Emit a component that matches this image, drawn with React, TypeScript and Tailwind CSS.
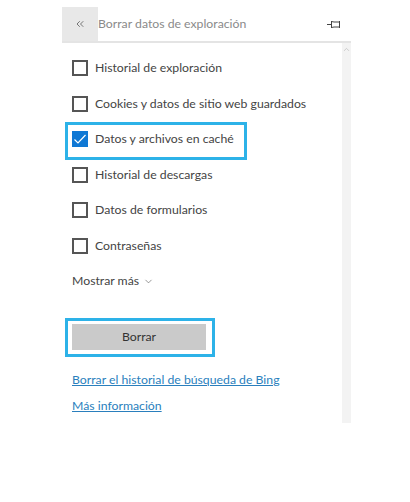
import { ChevronDown, ChevronUp, ChevronsLeft } from 'lucide-react'

function Checkbox({ label, checked }: { label: string; checked?: boolean }) {
  return (
    <div className="flex items-center gap-[7px] h-4">
      {checked ? (
        <div className="w-4 h-4 bg-[#0f78d4] flex items-center justify-center">
          <svg width="14" height="14" viewBox="0 0 14 14" fill="none">
            <path d="M1.5 7.5 L5 11 L12.5 3" stroke="white" strokeWidth="1.2" />
          </svg>
        </div>
      ) : (
        <div className="w-4 h-4 border-2 border-[#555555] bg-white" />
      )}
      <span className="text-[12.25px] leading-4 text-[#444444] whitespace-nowrap">{label}</span>
    </div>
  )
}

export default function App() {
  return (
    <div className="font-['Lato',sans-serif] w-[410px] h-[502px] bg-white pt-[7px] pl-[62px]">
      <div className="w-[289px] flex flex-col">
        {/* header */}
        <div className="h-[34px] flex items-center border-b-2 border-[#e4e4e4] box-content">
          <div className="w-9 h-[34px] bg-[#e8e8e8] flex items-center justify-center">
            <ChevronsLeft size={12} strokeWidth={1.4} className="text-[#444444]" />
          </div>
          <span className="flex-1 text-[12.25px] text-[#8a8a8a]">Borrar datos de exploración</span>
          <svg width="14" height="9" viewBox="0 0 14 9" fill="none" className="mr-[10px]" stroke="#444444">
            <path d="M0 4.5 H4.5 M4.5 1 V8 M4.5 1.5 L7 2 H12.5 V7 H7 L4.5 7.5 M12.5 1 V8" strokeWidth="1" />
          </svg>
        </div>

        <div className="flex h-[380px]">
          <div className="flex-1 flex flex-col pt-[17px] pl-[10px]">
            <div className="flex flex-col gap-[19.5px]">
              <Checkbox label="Historial de exploración" />
              <Checkbox label="Cookies y datos de sitio web guardados" />
              <div className="-mt-[9px] -mb-[13px] -ml-[7px] w-[182px] h-[38px] border-[3px] border-[#2db2e8] pt-[6px] pl-1">
                <Checkbox label="Datos y archivos en caché" checked />
              </div>
              <Checkbox label="Historial de descargas" />
              <Checkbox label="Datos de formularios" />
              <Checkbox label="Contraseñas" />
            </div>
            <div className="mt-[19.5px] flex items-center gap-1 text-[12.25px] leading-4 text-[#444444]">
              Mostrar más
              <ChevronDown size={11} strokeWidth={1.3} className="text-[#555555]" />
            </div>
            <div className="mt-[29px] -ml-[7px] w-[150px] h-[39px] border-[3px] border-[#2db2e8] pt-[3px] pb-1 pl-1 pr-[6px]">
              <div className="h-full bg-[#cacaca] flex items-center justify-center text-[12.25px] text-[#333333]">
                Borrar
              </div>
            </div>
            <a className="mt-[15px] text-[12.25px] leading-4 text-[#2a7fbd] underline">Borrar el historial de búsqueda de Bing</a>
            <a className="mt-[10px] text-[12.25px] leading-4 text-[#2a7fbd] underline">Más información</a>
          </div>
          <div className="w-[9px] bg-[#f3f3f3] flex justify-center pt-[2px]">
            <ChevronUp size={9} strokeWidth={1.5} className="text-[#b0b0b0]" />
          </div>
        </div>
      </div>
    </div>
  )
}
